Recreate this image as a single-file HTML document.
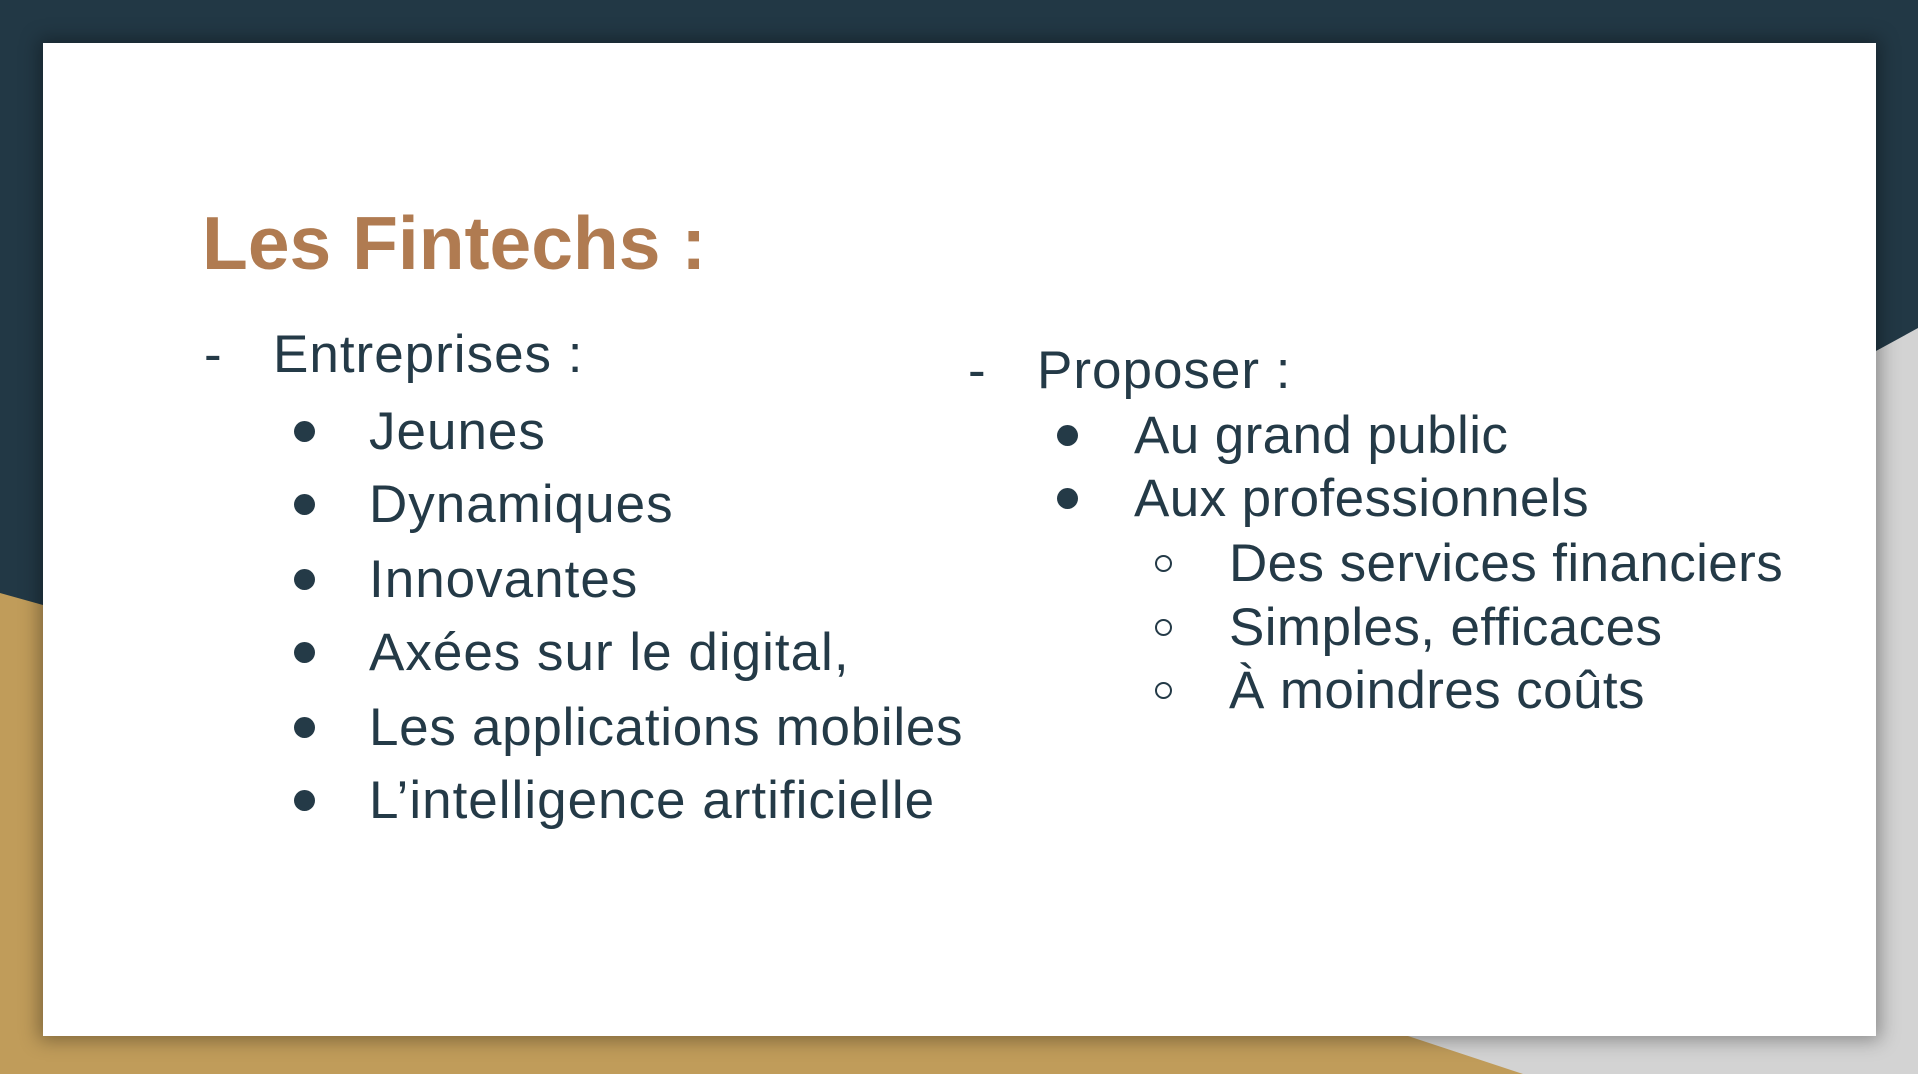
<!DOCTYPE html>
<html><head><meta charset="utf-8"><style>
html,body{margin:0;padding:0;width:1918px;height:1074px;overflow:hidden;background:#d3d3d3;position:relative;}
.bg{position:absolute;left:0;top:0;display:block;}
.card{position:absolute;left:43px;top:43px;width:1833px;height:993px;background:#fff;box-shadow:0 0 18px 4px rgba(0,0,0,0.35);}
.t{position:absolute;font-family:"Liberation Sans",sans-serif;white-space:nowrap;color:#243a47;font-size:53px;line-height:53px;letter-spacing:1px;}
.r{letter-spacing:0.4px;}
.title{font-size:75px;line-height:75px;font-weight:bold;color:#b07b51;letter-spacing:0;}
.dot{position:absolute;width:21px;height:21px;border-radius:50%;background:#243a47;}
.circ{position:absolute;width:17px;height:17px;border-radius:50%;border:2.5px solid #243a47;box-sizing:border-box;}
</style></head><body>
<svg class="bg" width="1918" height="1074">
<polygon points="0,0 1918,0 1918,328 1876,351 0,1074" fill="#223845"/>
<polygon points="0,593 426,712 1523,1074 0,1074" fill="#c09c5a"/>
</svg>
<div class="card"></div>
<div class="t title" style="left:202px;top:206px">Les Fintechs :</div>

<div class="t" style="left:204px;top:328px">-</div>
<div class="t" style="left:273px;top:328px">Entreprises :</div>
<div class="dot" style="left:294px;top:421px"></div><div class="t" style="left:369px;top:405px">Jeunes</div>
<div class="dot" style="left:294px;top:494px"></div><div class="t" style="left:369px;top:478px">Dynamiques</div>
<div class="dot" style="left:294px;top:569px"></div><div class="t" style="left:369px;top:553px">Innovantes</div>
<div class="dot" style="left:294px;top:642px"></div><div class="t" style="left:369px;top:626px">Axées sur le digital,</div>
<div class="dot" style="left:294px;top:717px"></div><div class="t" style="left:369px;top:701px;letter-spacing:0.7px">Les applications mobiles</div>
<div class="dot" style="left:294px;top:790px"></div><div class="t" style="left:369px;top:774px">L’intelligence artificielle</div>

<div class="t" style="left:968px;top:344px">-</div>
<div class="t" style="left:1037px;top:344px">Proposer :</div>
<div class="dot" style="left:1057px;top:425px"></div><div class="t r" style="left:1134px;top:409px">Au grand public</div>
<div class="dot" style="left:1057px;top:488px"></div><div class="t r" style="left:1134px;top:472px">Aux professionnels</div>
<div class="circ" style="left:1155px;top:555px"></div><div class="t r" style="left:1229px;top:537px">Des services financiers</div>
<div class="circ" style="left:1155px;top:619px"></div><div class="t r" style="left:1229px;top:601px">Simples, efficaces</div>
<div class="circ" style="left:1155px;top:682px"></div><div class="t r" style="left:1229px;top:664px">À moindres coûts</div>
</body></html>
